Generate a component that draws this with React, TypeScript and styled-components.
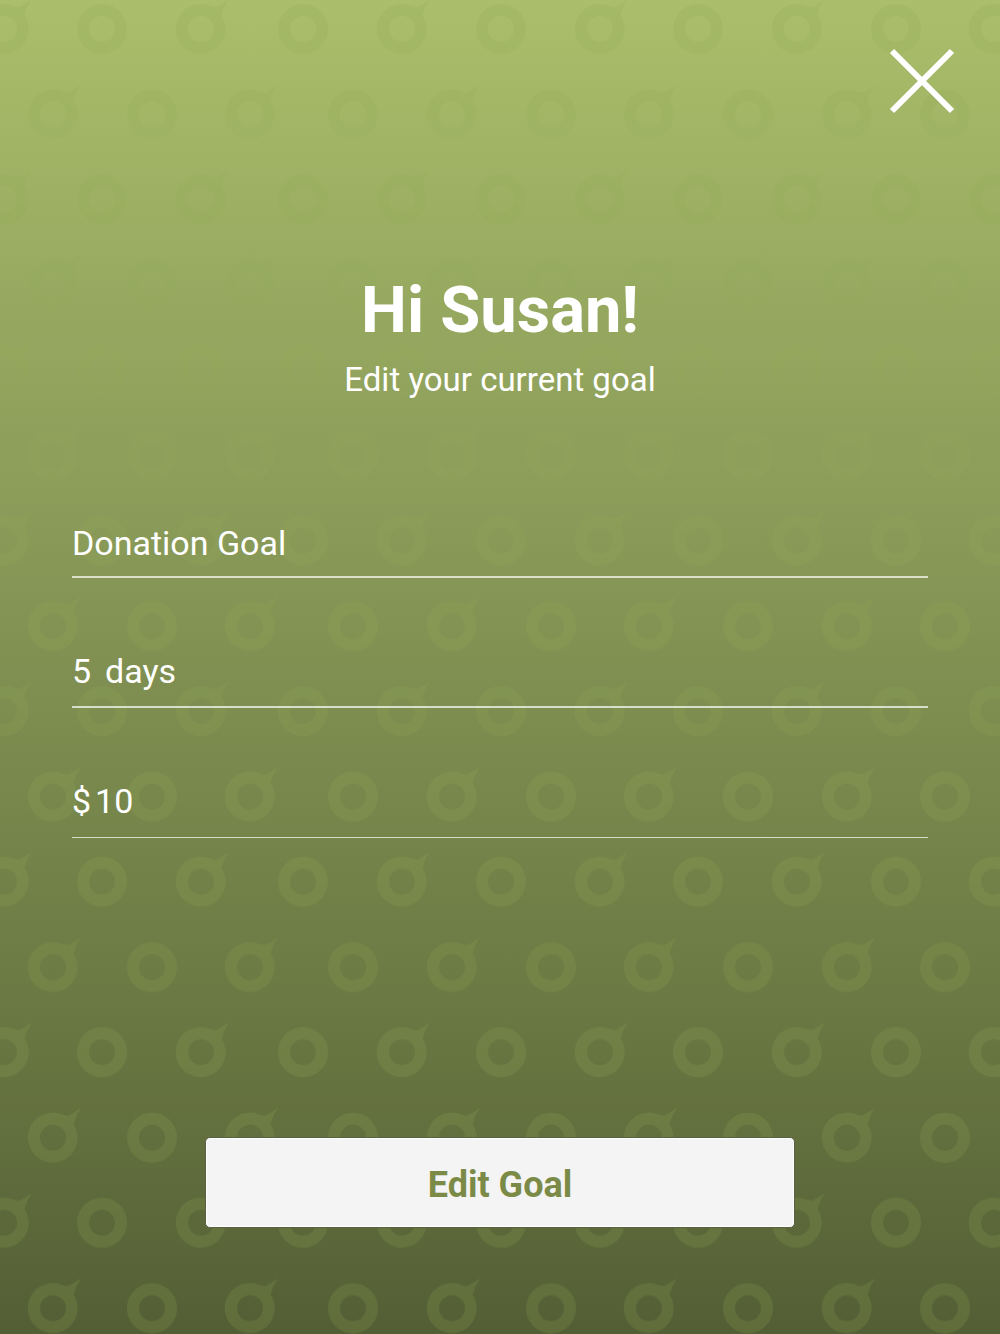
import React, { useState } from "react";
import styled, { createGlobalStyle } from "styled-components";

const GlobalStyle = createGlobalStyle`
  *, *::before, *::after { box-sizing: border-box; }
  body { margin: 0; font-family: Roboto, "Liberation Sans", sans-serif; color: #fff; }
`;

const Screen = styled.div`
  position: relative;
  isolation: isolate;
  min-height: 100vh;
  display: flex;
  flex-direction: column;
  padding: 48px 72px 106px;
  background: linear-gradient(
    #aabe6b 0%,
    #9aad62 18%,
    #8b9b59 38%,
    #748349 64%,
    #64713f 83%,
    #545e35 100%
  );
`;

const Backdrop = styled.svg`
  position: absolute;
  inset: 0;
  z-index: -1;
  width: 100%;
  height: 100%;
`;

const TopBar = styled.header`
  display: flex;
  justify-content: flex-end;
  margin-right: -28px;
`;

const CloseButton = styled.button`
  display: block;
  width: 68px;
  height: 68px;
  padding: 0;
  border: 0;
  background: none;
  color: inherit;
  cursor: pointer;
`;

const Heading = styled.div`
  margin-top: 156px;
  text-align: center;
`;

const Title = styled.h1`
  margin: 0;
  font-size: 65px;
  line-height: 76px;
  font-weight: 700;
`;

const Subtitle = styled.p`
  margin: 12px 0 0;
  font-size: 33px;
  line-height: 40px;
`;

const Form = styled.form`
  flex: 1;
  display: flex;
  flex-direction: column;
`;

const Fields = styled.div`
  display: flex;
  flex-direction: column;
  gap: 73px;
  margin-top: 123px;
`;

const Field = styled.label<{ $gap?: number }>`
  display: flex;
  align-items: flex-start;
  gap: ${(p) => p.$gap ?? 0}px;
  height: 57px;
  border-bottom: 2px solid rgba(255, 255, 255, 0.7);
  font-size: 34px;
  line-height: 40px;

  &:first-child { height: 55px; }
  &:last-child { border-bottom-width: 1px; }
`;

const Input = styled.input<{ $chars?: number }>`
  ${(p) => (p.$chars ? `width: ${p.$chars}ch;` : "flex: 1; min-width: 0;")}
  height: 40px;
  padding: 0;
  border: 0;
  outline: 0;
  background: none;
  color: inherit;
  font: inherit;
`;

const SubmitButton = styled.button`
  align-self: center;
  width: 100%;
  max-width: 590px;
  height: 91px;
  margin-top: auto;
  padding: 4px 0 0;
  border: 1px solid #59603f;
  border-radius: 5px;
  background: #f4f4f4;
  box-shadow: inset 0 0 0 1px #fff;
  color: #7b8b47;
  font: 700 36px/44px Roboto, "Liberation Sans", sans-serif;
  cursor: pointer;
`;

const EVEN_ROW = [4, 102, 201, 303, 402, 501, 600, 698, 797, 896, 994];
const ODD_ROW = [53, 152, 250, 353, 452, 551, 649, 748, 847, 945];

function Pattern() {
  const row = (columns: number[], y: number) =>
    columns.map((x, i) => (
      <use key={`${x}-${y}`} href={i % 2 === 0 ? "#tailRing" : "#ring"} x={x} y={y} />
    ));

  return (
    <Backdrop aria-hidden="true">
      <defs>
        <symbol id="ring" overflow="visible">
          <circle r="19" fill="none" stroke="#90aa55" strokeWidth="12" />
        </symbol>
        <symbol id="tailRing" overflow="visible">
          <path
            fill="#90aa55"
            fillRule="evenodd"
            d="M10-22.900L15-22Q23-26 28-30Q23-23 20.500-14A25 25 0 1 1 10-22.900ZM0-13A13 13 0 1 0 0 13A13 13 0 1 0 0-13Z"
          />
        </symbol>
        <pattern id="rings" width="990" height="170.540" patternUnits="userSpaceOnUse">
          {row(EVEN_ROW, 29)}
          {row(ODD_ROW, 114.500)}
        </pattern>
      </defs>
      <rect width="100%" height="100%" fill="url(#rings)" opacity="0.2" />
    </Backdrop>
  );
}

export default function App() {
  const [name, setName] = useState("Donation Goal");
  const [days, setDays] = useState("5");
  const [amount, setAmount] = useState("10");

  return (
    <Screen>
      <GlobalStyle />
      <Pattern />
      <TopBar>
        <CloseButton type="button" aria-label="Close">
          <svg width="68" height="68" viewBox="0 0 68 68" fill="none" stroke="currentColor" strokeWidth="6">
            <path d="M4 3L64 63M64 3L4 63" />
          </svg>
        </CloseButton>
      </TopBar>
      <Heading>
        <Title>Hi Susan!</Title>
        <Subtitle>Edit your current goal</Subtitle>
      </Heading>
      <Form onSubmit={(e) => e.preventDefault()}>
        <Fields>
          <Field>
            <Input aria-label="Goal name" value={name} onChange={(e) => setName(e.target.value)} />
          </Field>
          <Field $gap={14}>
            <Input aria-label="Days" $chars={1} value={days} onChange={(e) => setDays(e.target.value)} />
            <span>days</span>
          </Field>
          <Field $gap={4}>
            <span>$</span>
            <Input aria-label="Amount" value={amount} onChange={(e) => setAmount(e.target.value)} />
          </Field>
        </Fields>
        <SubmitButton type="submit">Edit Goal</SubmitButton>
      </Form>
    </Screen>
  );
}
